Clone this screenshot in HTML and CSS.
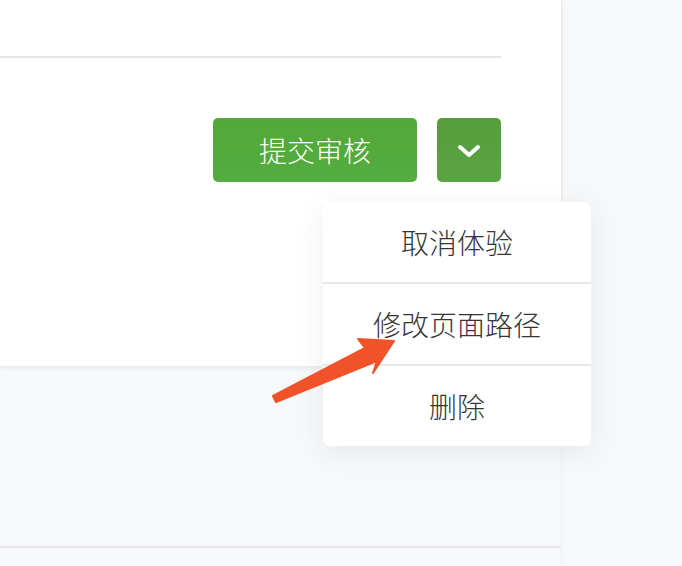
FILE: index.html
```html
<!DOCTYPE html>
<html lang="zh-CN">
<head>
  <meta charset="UTF-8" />
  <meta name="viewport" content="width=device-width, initial-scale=1.0"/>
  <title>提交审核</title>
  <link rel="stylesheet" href="styles.css">
</head>
<body>
  <div class="page">
    <section class="panel">
      <div class="panel-top"></div>
      <div class="actions">
        <button class="btn-submit">提交审核</button>
        <button class="btn-more">
          <svg width="24" height="16" viewBox="0 0 24 16">
            <polyline points="3,4 12,12 21,4" fill="none" stroke="#fff" stroke-width="4" stroke-linecap="round" stroke-linejoin="round"/>
          </svg>
        </button>
      </div>
    </section>
    <div class="below">
      <div class="below-line"></div>
    </div>
  </div>

  <ul class="menu">
    <li>取消体验</li>
    <li>修改页面路径</li>
    <li>删除</li>
  </ul>

  <svg class="arrow" width="682" height="566" viewBox="0 0 682 566">
    <polygon points="273,396 365,348 358,339 394,341 373,373 377,361 276,402" fill="#f0522a" stroke="#f0522a" stroke-width="2" stroke-linejoin="round"/>
  </svg>
</body>
</html>
```

FILE: styles.css
```css
body {
  margin: 0;
  padding: 0;
  background: #f7f8fa;
  font-family: "Noto Sans CJK SC", "Noto Sans", sans-serif;
  overflow: hidden;
}

.page {
  width: 561px;
  height: 566px;
  display: flex;
  flex-direction: column;
  box-shadow: 1px 0 2px rgba(0,0,0,0.04);
}

.panel {
  height: 366px;
  background: #fff;
  padding-right: 60px;
  box-shadow: 0 2px 5px rgba(0,0,0,0.07);
  position: relative;
  z-index: 1;
}

.panel-top {
  height: 56px;
  border-bottom: 2px solid #e6e6eb;
}

.actions {
  display: flex;
  justify-content: flex-end;
  gap: 20px;
  padding-top: 60px;
}

.actions button {
  height: 64px;
  border: none;
  border-radius: 5px;
  color: #fff;
  font-family: inherit;
  font-weight: 300;
  padding: 0;
}

.btn-submit {
  width: 204px;
  font-size: 28px;
  background: linear-gradient(to bottom, #52a939, #55ac3f);
}

.btn-more {
  width: 64px;
  background: linear-gradient(to bottom, #559e3b, #5aa445);
  display: flex;
  align-items: center;
  justify-content: center;
}

.btn-more svg {
  margin-top: 2px;
}

.below {
  flex: 1;
  display: flex;
  flex-direction: column;
  justify-content: flex-end;
  padding-bottom: 18px;
}

.below-line {
  height: 2px;
  background: #e6e6eb;
}

.menu {
  position: absolute;
  left: 323px;
  top: 202px;
  width: 268px;
  margin: 0;
  padding: 0;
  list-style: none;
  background: #fff;
  border-radius: 7px;
  box-shadow: 0 6px 30px rgba(0,0,0,0.07);
  z-index: 2;
}

.menu li {
  height: 80px;
  line-height: 80px;
  text-align: center;
  font-size: 28px;
  font-weight: 300;
  color: #353535;
}

.menu li + li {
  border-top: 2px solid #e6e6eb;
}

.arrow {
  position: absolute;
  left: 0;
  top: 0;
  z-index: 3;
  pointer-events: none;
}
```
